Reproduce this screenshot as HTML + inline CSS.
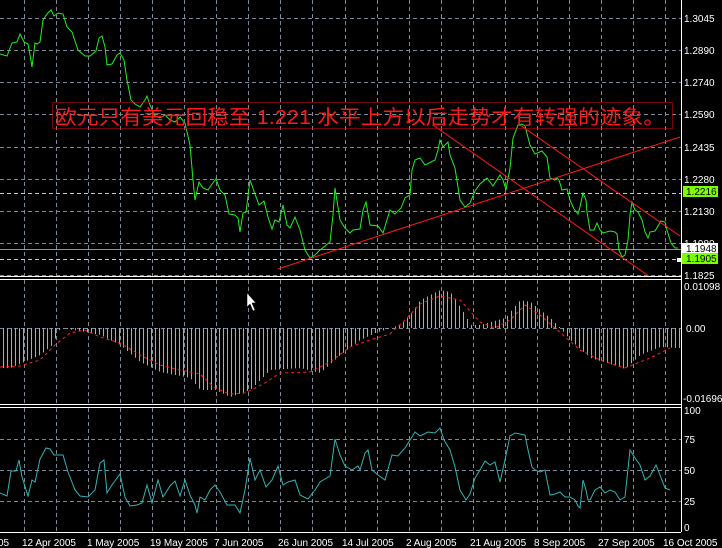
<!DOCTYPE html>
<html><head><meta charset="utf-8"><style>
html,body{margin:0;padding:0;background:#000;width:722px;height:548px;overflow:hidden}
svg{display:block}
text{font-family:"Liberation Sans",sans-serif;font-size:10px;fill:#fff}
</style></head><body>
<svg id="s" width="722" height="548" viewBox="0 0 722 548" xmlns="http://www.w3.org/2000/svg">
<rect width="722" height="548" fill="#000"/>
<g id="grid" stroke="#7a8899" stroke-width="1" stroke-dasharray="4,3" fill="none"></g>
<line x1="0" y1="193.5" x2="681" y2="193.5" stroke="#c8e62a" stroke-dasharray="4,3"/>
<line x1="0" y1="259.5" x2="681" y2="259.5" stroke="#c8e62a" stroke-dasharray="4,3"/>
<line x1="0" y1="249.5" x2="681" y2="249.5" stroke="#8a96a4"/>
<polyline fill="none" stroke="#22ee22" stroke-width="1" points="0,54 7,56 12,43 17,42 20,34 24,42 28,44 30,55 32,67 35,43 37,44 40,42 43,20 47,14 51,10 54,16 58,13 63,14 67,27 72,32 78,50 85,56 90,56 96,51 99,38 102,36 105,47 107,65 112,64 117,55 120,53 124,60 127,80 131,100 135,104 140,107 145,100 147,96 150,105 155,116 160,118 165,115 170,120 175,122 180,117 185,123 190,145 193,180 195,200 199,182 203,188 208,190 212,184 216,179 220,190 225,195 229,214 235,215 238,218 240,232 243,213 246,212 250,180 255,194 259,205 264,201 268,217 272,229 275,220 279,222 283,205 287,225 290,228 295,217 300,230 305,250 310,258 315,255 320,250 330,242 333,215 335,188 340,220 345,228 350,233 353,230 360,229 363,210 366,202 370,225 378,226 383,233 390,210 395,214 401,208 405,198 410,195 412,170 415,160 420,158 425,165 435,160 438,150 440,140 443,147 448,142 450,155 455,168 460,200 465,207 470,203 475,191 480,184 487,178 493,186 500,175 503,180 506,190 510,168 513,138 518,125 522,124 525,126 530,145 535,154 542,151 547,157 550,178 555,180 557,178 559,180 562,190 567,189 570,200 574,209 578,214 580,207 583,193 586,200 587,212 590,230 594,230 597,223 600,230 603,233 610,231 615,232 617,234 618,242 619,250 622,257 625,255 628,240 630,215 632,202 635,210 638,212 642,220 645,232 648,238 650,232 655,231 661,221 665,222 667,230 671,243 675,248 678,248"/>
<g stroke="#ff1a1a" stroke-width="1">
<line x1="278" y1="269" x2="680" y2="137"/>
<line x1="433" y1="125" x2="650" y2="277"/>
<line x1="520" y1="125" x2="680" y2="236"/>
</g>
<rect x="52.5" y="102.5" width="620" height="26" fill="none" stroke="#e01010" stroke-dasharray="1,1"/>
<text x="55" y="124" textLength="610" lengthAdjust="spacingAndGlyphs" style="font-family:'Liberation Sans','Noto Sans CJK SC',sans-serif;font-size:20px;fill:#ff1a1a">欧元只有美元回稳至 1.221 水平上方以后走势才有转强的迹象。</text>
<line x1="0" y1="328.5" x2="681" y2="328.5" stroke="#7a8899" stroke-dasharray="4,3"/>
<g id="bars" stroke="#9acd32" stroke-width="1"></g>
<polyline fill="none" stroke="#ff2020" stroke-dasharray="3,3" points="0,367 20,366 40,360 55,345 70,333 85,330 100,337 120,343 140,355 160,365 180,370 200,374 215,388 230,394 245,393 265,383 280,373 310,372 330,362 350,347 370,340 390,334 405,320 420,304 440,296 460,300 480,322 495,328 510,320 525,305 540,315 555,328 580,350 600,360 625,368 650,358 670,348"/>
<polyline fill="none" stroke="#33b3b3" stroke-width="1" points="0,493 7,496 11,471 16,471 19,460 22,477 28,496 32,480 35,482 40,459 46,448 50,449 54,455 58,455 63,455 68,472 75,490 80,496 88,497 95,490 100,463 104,460 107,493 112,485 120,474 125,497 130,506 137,505 142,503 147,485 152,503 158,480 163,497 170,486 175,481 180,496 185,480 190,495 195,505 197,513 200,497 205,500 210,490 215,485 220,492 227,505 235,505 240,513 245,490 250,458 255,480 260,470 266,487 272,480 278,466 283,485 288,482 295,480 300,495 308,499 315,490 320,482 330,476 335,439 340,455 345,466 352,470 358,466 360,470 365,453 368,450 372,470 378,475 385,480 392,455 398,456 405,448 410,440 415,432 420,436 428,432 435,433 440,428 444,440 450,450 455,467 460,490 466,500 470,494 475,478 480,470 485,461 490,465 495,462 500,482 505,460 510,436 515,433 525,435 528,450 532,467 535,470 540,472 545,470 550,495 555,494 560,492 565,497 570,497 575,500 578,506 580,508 583,480 586,490 588,500 590,500 595,490 600,487 605,493 610,490 615,492 620,500 625,497 630,450 635,458 640,465 645,480 650,476 656,465 660,475 665,488 670,490"/>
<g stroke="#fff" stroke-width="1">
<line x1="681.5" y1="0" x2="681.5" y2="532"/>
<line x1="0" y1="276.5" x2="681" y2="276.5"/>
<line x1="0" y1="279.5" x2="681" y2="279.5"/>
<line x1="0" y1="404.5" x2="681" y2="404.5"/>
<line x1="0" y1="407.5" x2="681" y2="407.5"/>
<line x1="0" y1="532.5" x2="681" y2="532.5"/>
</g>
<g>
<text x="684" y="22">1.3045</text>
<text x="684" y="54">1.2890</text>
<text x="684" y="86">1.2740</text>
<text x="684" y="118">1.2590</text>
<text x="684" y="151">1.2435</text>
<text x="684" y="183">1.2280</text>
<text x="684" y="215">1.2130</text>
<text x="684" y="247">1.1980</text>
<text x="684" y="279">1.1825</text>
<rect x="683" y="186" width="35" height="11" fill="#7cfc00"/>
<text x="686" y="195" style="fill:#000">1.2216</text>
<rect x="682" y="243" width="36" height="10" fill="#fff"/>
<text x="686" y="252" style="fill:#000">1.1948</text>
<rect x="682" y="253" width="36" height="11" fill="#7cfc00"/>
<text x="686" y="262" style="fill:#000">1.1905</text>
<rect x="677" y="258" width="5" height="4" fill="#fff"/>
<text x="684" y="290">0.01098</text>
<text x="686" y="332">0.00</text>
<text x="683" y="402">-0.01696</text>
<text x="684" y="414">100</text>
<text x="684" y="443">75</text>
<text x="684" y="474">50</text>
<text x="684" y="505">25</text>
<text x="684" y="531">0</text>
</g>
<g>
<text x="-2" y="546">05</text>
<text x="22" y="546">12 Apr 2005</text>
<text x="87" y="546">1 May 2005</text>
<text x="150" y="546">19 May 2005</text>
<text x="214" y="546">7 Jun 2005</text>
<text x="278" y="546">26 Jun 2005</text>
<text x="342" y="546">14 Jul 2005</text>
<text x="406" y="546">2 Aug 2005</text>
<text x="470" y="546">21 Aug 2005</text>
<text x="534" y="546">8 Sep 2005</text>
<text x="598" y="546">27 Sep 2005</text>
<text x="663" y="546">16 Oct 2005</text>
</g>
<path d="M247,293 L247,307 L250,304 L253,311 L255,310 L252,303 L256,303 Z" fill="#fff" stroke="#000" stroke-width="0.5"/>
</svg>
<script>
(function(){
var ns="http://www.w3.org/2000/svg",g=document.getElementById("grid");
function L(p,x1,y1,x2,y2){var l=document.createElementNS(ns,"line");l.setAttribute("x1",x1);l.setAttribute("y1",y1);l.setAttribute("x2",x2);l.setAttribute("y2",y2);p.appendChild(l);}
for(var k=0;k<21;k++){var x=Math.round(24+32.05*k)+0.5;L(g,x,0,x,276);L(g,x,280,x,404);L(g,x,408,x,532);}
[18,50,82,114,147,179,211,243,275].forEach(function(y){L(g,0,y+0.5,681,y+0.5);});
[439,470,501].forEach(function(y){L(g,0,y+0.5,681,y+0.5);});
var m=[[0,368],[10,368],[40,355],[52,345],[60,328],[80,331],[100,335],[120,345],[140,362],[160,372],[190,378],[200,390],[215,390],[230,397],[250,390],[270,370],[300,368],[320,373],[340,355],[360,340],[375,333],[390,328],[400,325],[410,315],[420,300],[440,290],[450,292],[465,315],[470,325],[480,325],[505,318],[520,300],[530,302],[550,318],[560,328],[570,340],[590,358],[610,364],[625,369],[640,355],[660,347],[678,348]];
function f(x){for(var i=1;i<m.length;i++){if(x<=m[i][0]){var a=m[i-1],b=m[i];return a[1]+(b[1]-a[1])*(x-a[0])/(b[0]-a[0]);}}return 348;}
var b=document.getElementById("bars");
for(var x=3;x<680;x+=4){var y=f(x);var xx=x+0.5;L(b,xx,328,xx,y);}
})();
</script>
</body></html>
